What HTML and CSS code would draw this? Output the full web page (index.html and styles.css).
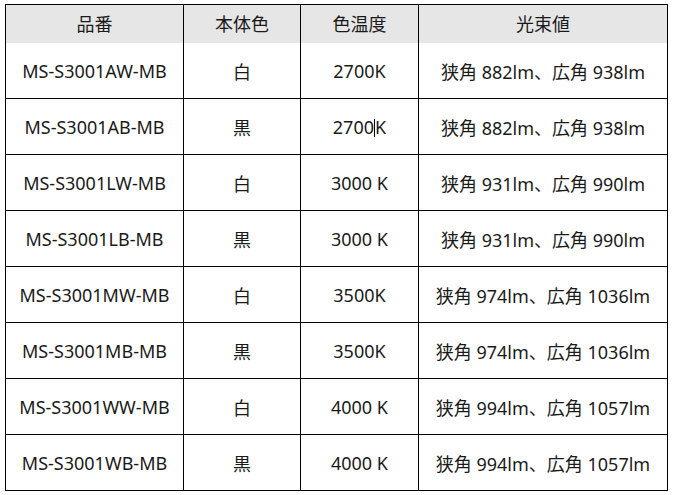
FILE: index.html
```html
<!DOCTYPE html>
<html lang="ja">
<head>
<meta charset="utf-8">
<link rel="stylesheet" href="styles.css">
</head>
<body>
<table class="spec">
  <colgroup>
    <col class="c-model">
    <col class="c-body">
    <col class="c-temp">
    <col class="c-flux">
  </colgroup>
  <thead>
    <tr><th>品番</th><th>本体色</th><th>色温度</th><th>光束値</th></tr>
  </thead>
  <tbody>
    <tr><td>MS-S3001AW-MB</td><td>白</td><td>2700K</td><td>狭角 882lm、広角 938lm</td></tr>
    <tr><td>MS-S3001AB-MB</td><td>黒</td><td>2700<span class="caret"></span>K</td><td>狭角 882lm、広角 938lm</td></tr>
    <tr><td>MS-S3001LW-MB</td><td>白</td><td>3000 K</td><td>狭角 931lm、広角 990lm</td></tr>
    <tr><td>MS-S3001LB-MB</td><td>黒</td><td>3000 K</td><td>狭角 931lm、広角 990lm</td></tr>
    <tr><td>MS-S3001MW-MB</td><td>白</td><td>3500K</td><td>狭角 974lm、広角 1036lm</td></tr>
    <tr><td>MS-S3001MB-MB</td><td>黒</td><td>3500K</td><td>狭角 974lm、広角 1036lm</td></tr>
    <tr><td>MS-S3001WW-MB</td><td>白</td><td>4000 K</td><td>狭角 994lm、広角 1057lm</td></tr>
    <tr><td>MS-S3001WB-MB</td><td>黒</td><td>4000 K</td><td>狭角 994lm、広角 1057lm</td></tr>
  </tbody>
</table>
</body>
</html>
```

FILE: styles.css
```css
html, body {
  margin: 0;
  padding: 0;
  background: #ffffff;
}
body {
  padding: 4px 0 0 5px;
  font-family: "Noto Sans", "Noto Sans CJK JP", sans-serif;
  color: #1a1a1a;
}
.spec {
  border-collapse: collapse;
  table-layout: fixed;
  width: 662px;
  font-size: 18px;
}
.c-model { width: 178px; }
.c-body { width: 117px; }
.c-temp { width: 118px; }
.c-flux { width: 249px; }
.spec th,
.spec td {
  border-left: 1px solid #000;
  border-right: 1px solid #000;
  text-align: center;
  vertical-align: middle;
  padding: 0;
  font-weight: normal;
  white-space: nowrap;
}
.spec th {
  background: #e7e6e6;
  height: 35px;
  border-top: 1px solid #000;
  padding-bottom: 3px;
}
.spec td {
  height: 55px;
  border-bottom: 1px solid #000;
}
.caret {
  display: inline-block;
  width: 1px;
  height: 18px;
  background: #000;
  vertical-align: -3px;
}
```
